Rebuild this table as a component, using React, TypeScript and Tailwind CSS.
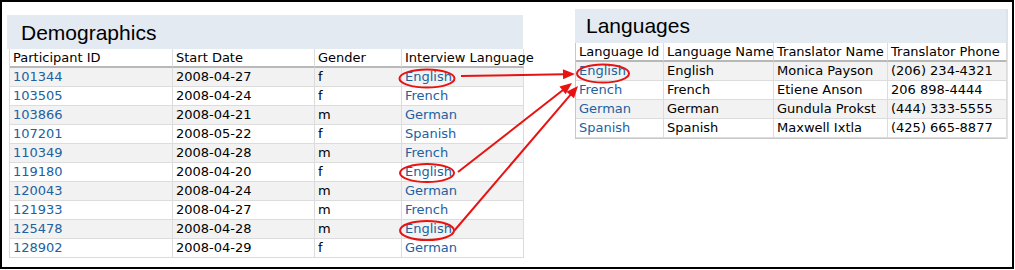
const demographics = [
  ['101344', '2008-04-27', 'f', 'English'],
  ['103505', '2008-04-24', 'f', 'French'],
  ['103866', '2008-04-21', 'm', 'German'],
  ['107201', '2008-05-22', 'f', 'Spanish'],
  ['110349', '2008-04-28', 'm', 'French'],
  ['119180', '2008-04-20', 'f', 'English'],
  ['120043', '2008-04-24', 'm', 'German'],
  ['121933', '2008-04-27', 'm', 'French'],
  ['125478', '2008-04-28', 'm', 'English'],
  ['128902', '2008-04-29', 'f', 'German'],
]

const languages = [
  ['English', 'English', 'Monica Payson', '(206) 234-4321'],
  ['French', 'French', 'Etiene Anson', '206 898-4444'],
  ['German', 'German', 'Gundula Prokst', '(444) 333-5555'],
  ['Spanish', 'Spanish', 'Maxwell Ixtla', '(425) 665-8877'],
]

const RED = '#e81212'

// arrow from (x1,y1) with head at (x2,y2)
const Arrow = ({ x1, y1, x2, y2 }: { x1: number; y1: number; x2: number; y2: number }) => {
  const dx = x2 - x1
  const dy = y2 - y1
  const len = Math.hypot(dx, dy)
  const ux = dx / len
  const uy = dy / len
  const bx = x2 - ux * 12
  const by = y2 - uy * 12
  const pts = `${x2},${y2} ${bx - uy * 5},${by + ux * 5} ${bx + uy * 5},${by - ux * 5}`
  return (
    <g>
      <line x1={x1} y1={y1} x2={bx + ux} y2={by + uy} stroke={RED} strokeWidth={2} />
      <polygon points={pts} fill={RED} />
    </g>
  )
}

const Cell = ({ children, link, head }: { children: string; link?: boolean; head?: boolean }) => (
  <div
    className={
      'h-[19px] pl-[3px] whitespace-nowrap border-r border-[#dcdcdc] ' +
      (head ? 'border-b-2 border-b-[#b8b8b8] leading-[17px] ' : 'border-b leading-[18px] ') +
      (link ? 'text-[#21619f]' : 'text-black')
    }
  >
    {children}
  </div>
)

export default function App() {
  return (
    <div className="relative w-[1015px] h-[270px] bg-white" style={{ fontFamily: '"DejaVu Sans", Verdana, sans-serif' }}>
      <div className="w-[1014px] h-[269px] border-2 border-black flex items-start text-[13px]">
        {/* Demographics */}
        <div className="ml-[5px] mt-[13px] w-[516px]">
          <div className="h-[34px] bg-[#e4eaf2] flex items-center pl-[14px] pt-[1px] text-[21px] text-black" style={{ fontFamily: '"Liberation Sans", Arial, sans-serif' }}>
            Demographics
          </div>
          <div className="ml-[2px] border-l border-[#dcdcdc] grid grid-cols-[163px_142px_87px_122px]">
            <Cell head>Participant ID</Cell>
            <Cell head>Start Date</Cell>
            <Cell head>Gender</Cell>
            <Cell head>Interview Language</Cell>
            {demographics.map((r, i) => (
              <div key={r[0]} className={'contents ' + (i % 2 === 0 ? '[&>div]:bg-[#f2f2f2]' : '[&>div]:bg-white')}>
                <Cell link>{r[0]}</Cell>
                <Cell>{r[1]}</Cell>
                <Cell>{r[2]}</Cell>
                <Cell link>{r[3]}</Cell>
              </div>
            ))}
          </div>
        </div>

        {/* Languages */}
        <div className="ml-[52px] mt-[7px] w-[433px] border-r-2 border-[#dde3ea]">
          <div className="h-[34px] bg-[#e4eaf2] flex items-center pl-[11px] text-[21px] text-black" style={{ fontFamily: '"Liberation Sans", Arial, sans-serif' }}>
            Languages
          </div>
          <div className="border-l border-b border-[#c8c8c8] grid grid-cols-[88px_110px_114px_119px]">
            <Cell head>Language Id</Cell>
            <Cell head>Language Name</Cell>
            <Cell head>Translator Name</Cell>
            <Cell head>Translator Phone</Cell>
            {languages.map((r, i) => (
              <div key={r[0]} className={'contents ' + (i % 2 === 0 ? '[&>div]:bg-[#f2f2f2]' : '[&>div]:bg-white')}>
                <Cell link>{r[0]}</Cell>
                <Cell>{r[1]}</Cell>
                <Cell>{r[2]}</Cell>
                <Cell>{r[3]}</Cell>
              </div>
            ))}
          </div>
        </div>
      </div>

      {/* red annotation overlay */}
      <svg className="absolute inset-0 pointer-events-none" width="1015" height="270" viewBox="0 0 1015 270">
        <ellipse cx={427} cy={78.5} rx={27.5} ry={9} fill="none" stroke={RED} strokeWidth={2} />
        <ellipse cx={427} cy={173} rx={27} ry={9} fill="none" stroke={RED} strokeWidth={2} />
        <ellipse cx={427} cy={230.5} rx={27} ry={9.5} fill="none" stroke={RED} strokeWidth={2} />
        <ellipse cx={603} cy={73.5} rx={26} ry={9} fill="none" stroke={RED} strokeWidth={2} />
        <Arrow x1={461} y1={76} x2={575} y2={74} />
        <Arrow x1={458} y1={172} x2={572} y2={83} />
        <Arrow x1={454} y1={231} x2={578} y2={86} />
      </svg>
    </div>
  )
}
